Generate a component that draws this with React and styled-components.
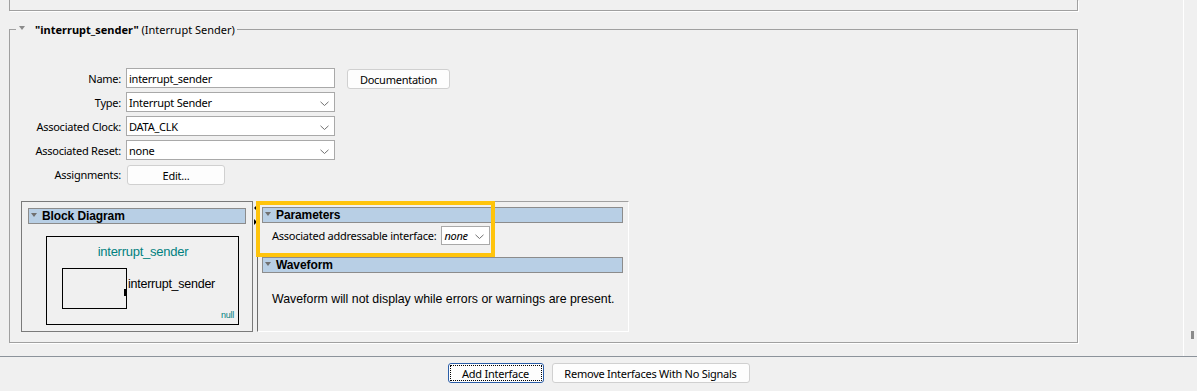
import styled, { createGlobalStyle } from "styled-components";

const GlobalStyle = createGlobalStyle`
  html, body {
    margin: 0;
    padding: 0;
    background: #f0f0f0;
  }
  body {
    font-family: "Noto Sans", "Open Sans", sans-serif;
    font-size: 11px;
    letter-spacing: -0.25px;
    color: #000;
  }
`;

const Window = styled.div`
  width: 1197px;
  height: 391px;
  display: flex;
  flex-direction: column;
  background: #f0f0f0;
  overflow: hidden;
`;

const ScrollArea = styled.div`
  height: 356px;
  display: flex;
`;

const Content = styled.div`
  width: 1183px;
  padding-left: 9px;
  box-sizing: border-box;
`;

const ScrollBar = styled.div`
  width: 14px;
  box-sizing: border-box;
  border-left: 1px solid #ffffff;
  padding: 0 0 17px 7px;
  display: flex;
  flex-direction: column;
  justify-content: flex-end;
`;

const Thumb = styled.div`
  width: 3px;
  height: 8px;
  background: #8a8a8a;
`;

const TopBox = styled.div`
  width: 1069px;
  height: 11px;
  box-sizing: border-box;
  border: 1px solid #a0a0a0;
  border-top: none;
  box-shadow: 1px 1px 0 #ffffff;
`;

const Group = styled.fieldset`
  width: 1069px;
  box-sizing: border-box;
  margin: 10px 0 0;
  padding: 0;
  min-width: 0;
  border: 1px solid #a0a0a0;
  box-shadow: 1px 1px 0 #ffffff;
`;

const Legend = styled.legend`
  margin-left: 6px;
  padding: 0 2px 0 3px;
  height: 16px;
  display: flex;
  align-items: center;
  font-size: 11px;
  letter-spacing: 0;
  white-space: nowrap;
`;

const DownArrow = styled.span`
  width: 0;
  height: 0;
  border-left: ${(p) => p.$size || 3.5}px solid transparent;
  border-right: ${(p) => p.$size || 3.5}px solid transparent;
  border-top: 4px solid ${(p) => p.$color || "#8a8a8a"};
  margin-right: ${(p) => p.$gap || 10}px;
  margin-bottom: 2px;
  flex-shrink: 0;
`;

const GroupBody = styled.div`
  padding: 31px 0 10px 11px;
`;

const Form = styled.div`
  display: grid;
  grid-template-columns: 100px 209px auto;
  grid-auto-rows: 20px;
  column-gap: 5px;
  row-gap: 4px;
  align-items: center;
`;

const Label = styled.label`
  text-align: right;
  white-space: nowrap;
`;

const Field = styled.div`
  height: ${(p) => p.$height || 20}px;
  box-sizing: border-box;
  border: 1px solid #a9a9a9;
  background: #ffffff;
  display: flex;
  align-items: center;
  justify-content: space-between;
  padding: 0 5px 0 2px;
  font-style: ${(p) => (p.$italic ? "italic" : "normal")};
  width: ${(p) => (p.$width ? `${p.$width}px` : "auto")};
`;

const Chevron = () => (
  <svg width="9" height="6" viewBox="0 0 9 6" style={{ marginTop: 3, flexShrink: 0 }}>
    <polyline points="0.5,0.8 4.5,4.5 8.5,0.8" fill="none" stroke="#707070" strokeWidth="1" />
  </svg>
);

const Button = styled.button`
  height: 20px;
  box-sizing: border-box;
  width: ${(p) => p.$width}px;
  margin-top: 1px;
  margin-left: ${(p) => p.$offset || 0}px;
  align-self: start;
  justify-self: start;
  padding: 0;
  font-family: "Noto Sans", "Open Sans", sans-serif;
  font-size: 11px;
  letter-spacing: -0.25px;
  color: #000;
  background: #fdfdfd;
  border: 1px solid ${(p) => (p.$focused ? "#2b5ea8" : "#d0d0d0")};
  border-radius: 3px;
  outline: ${(p) => (p.$focused ? "1px dotted #000" : "none")};
  outline-offset: -3px;
`;

const Lower = styled.div`
  margin-top: 17px;
  width: 608px;
  height: 131px;
  display: flex;
`;

const BlockPanel = styled.div`
  width: 232px;
  box-sizing: border-box;
  border: 1px solid #7a7a7a;
  padding: 6px;
`;

const Header = styled.div`
  height: 16px;
  box-sizing: border-box;
  border: 1px solid #8c8c8c;
  background: #b8cfe5;
  display: flex;
  align-items: center;
  padding-left: 2px;
  font-family: "Liberation Sans", Arial, sans-serif;
  font-weight: bold;
  font-size: 12px;
  letter-spacing: -0.1px;
`;

const Diagram = styled.svg`
  display: block;
  margin: 12px 0 0 18px;
`;

const Splitter = styled.div`
  width: 4px;
  display: flex;
  flex-direction: column;
  align-items: center;
  padding-top: 4px;
  gap: 8px;
`;

const SideArrow = styled.span`
  width: 0;
  height: 0;
  border-top: 3px solid transparent;
  border-bottom: 3px solid transparent;
  ${(p) => (p.$dir === "left" ? "border-right: 3px solid #000;" : "border-left: 3px solid #000;")}
`;

const PropPanel = styled.div`
  position: relative;
  width: 372px;
  box-sizing: border-box;
  border-left: 1px solid #6e6e6e;
  border-top: 1px solid #a0a0a0;
  border-right: 1px solid #ffffff;
  border-bottom: 1px solid #ffffff;
  padding: 5px 5px 0 4px;
`;

const ParamRow = styled.div`
  display: flex;
  align-items: center;
  gap: 5px;
  margin: 3px 0 12px 10px;
`;

const Message = styled.p`
  margin: 19px 0 0 10px;
  font-family: "Liberation Sans", Arial, sans-serif;
  font-size: 12.35px;
  letter-spacing: 0;
  line-height: 14px;
`;

const Highlight = styled.div`
  position: absolute;
  left: -2px;
  top: -1px;
  width: 239px;
  height: 56px;
  box-sizing: border-box;
  border: 4px solid #ffc40c;
  pointer-events: none;
`;

const BottomBar = styled.div`
  flex: 1;
  border-top: 1px solid #8c939b;
  display: flex;
  justify-content: center;
  gap: 8px;
  padding-top: 5px;
`;

const rows = [
  { label: "Type:", value: "Interrupt Sender" },
  { label: "Associated Clock:", value: "DATA_CLK" },
  { label: "Associated Reset:", value: "none" },
];

export default function App() {
  return (
    <Window>
      <GlobalStyle />
      <ScrollArea>
        <Content>
          <TopBox />
          <Group>
            <Legend>
              <DownArrow />
              <b>"interrupt_sender"</b>&nbsp;(Interrupt Sender)
            </Legend>
            <GroupBody>
              <Form>
                <Label>Name:</Label>
                <Field>interrupt_sender</Field>
                <Button $width={103} $offset={7}>Documentation</Button>
                {rows.map((r) => [
                  <Label key={r.label}>{r.label}</Label>,
                  <Field key={r.label + "f"}>
                    {r.value}
                    <Chevron />
                  </Field>,
                  <span key={r.label + "s"} />,
                ])}
                <Label>Assignments:</Label>
                <Button $width={98} $offset={1}>Edit...</Button>
              </Form>
              <Lower>
                <BlockPanel>
                  <Header>
                    <DownArrow $color="#707070" $size={3} $gap={5} />
                    Block Diagram
                  </Header>
                  <Diagram width="193" height="89" viewBox="0 0 193 89">
                    <rect x="0.5" y="0.5" width="192" height="88" fill="none" stroke="#000" />
                    <text x="97" y="20" textAnchor="middle" fill="#00807f" fontFamily="Liberation Sans, Arial, sans-serif" fontSize="13">
                      interrupt_sender
                    </text>
                    <rect x="16.5" y="32.5" width="64" height="40" fill="none" stroke="#000" />
                    <rect x="78" y="53" width="3" height="7" fill="#000" />
                    <text x="82" y="52" fill="#000" fontFamily="Liberation Sans, Arial, sans-serif" fontSize="12.5">
                      interrupt_sender
                    </text>
                    <text x="175" y="82" fill="#00807f" fontFamily="Liberation Sans, Arial, sans-serif" fontSize="9">
                      null
                    </text>
                  </Diagram>
                </BlockPanel>
                <Splitter>
                  <SideArrow $dir="left" />
                  <SideArrow $dir="right" />
                </Splitter>
                <PropPanel>
                  <Header>
                    <DownArrow $color="#707070" $size={3} $gap={5} />
                    Parameters
                  </Header>
                  <ParamRow>
                    <span>Associated addressable interface:</span>
                    <Field $italic $width={49} $height={19}>
                      none
                      <Chevron />
                    </Field>
                  </ParamRow>
                  <Header>
                    <DownArrow $color="#707070" $size={3} $gap={5} />
                    Waveform
                  </Header>
                  <Message>Waveform will not display while errors or warnings are present.</Message>
                  <Highlight />
                </PropPanel>
              </Lower>
            </GroupBody>
          </Group>
        </Content>
        <ScrollBar>
          <Thumb />
        </ScrollBar>
      </ScrollArea>
      <BottomBar>
        <Button $width={96} $focused>Add Interface</Button>
        <Button $width={198}>Remove Interfaces With No Signals</Button>
      </BottomBar>
    </Window>
  );
}
